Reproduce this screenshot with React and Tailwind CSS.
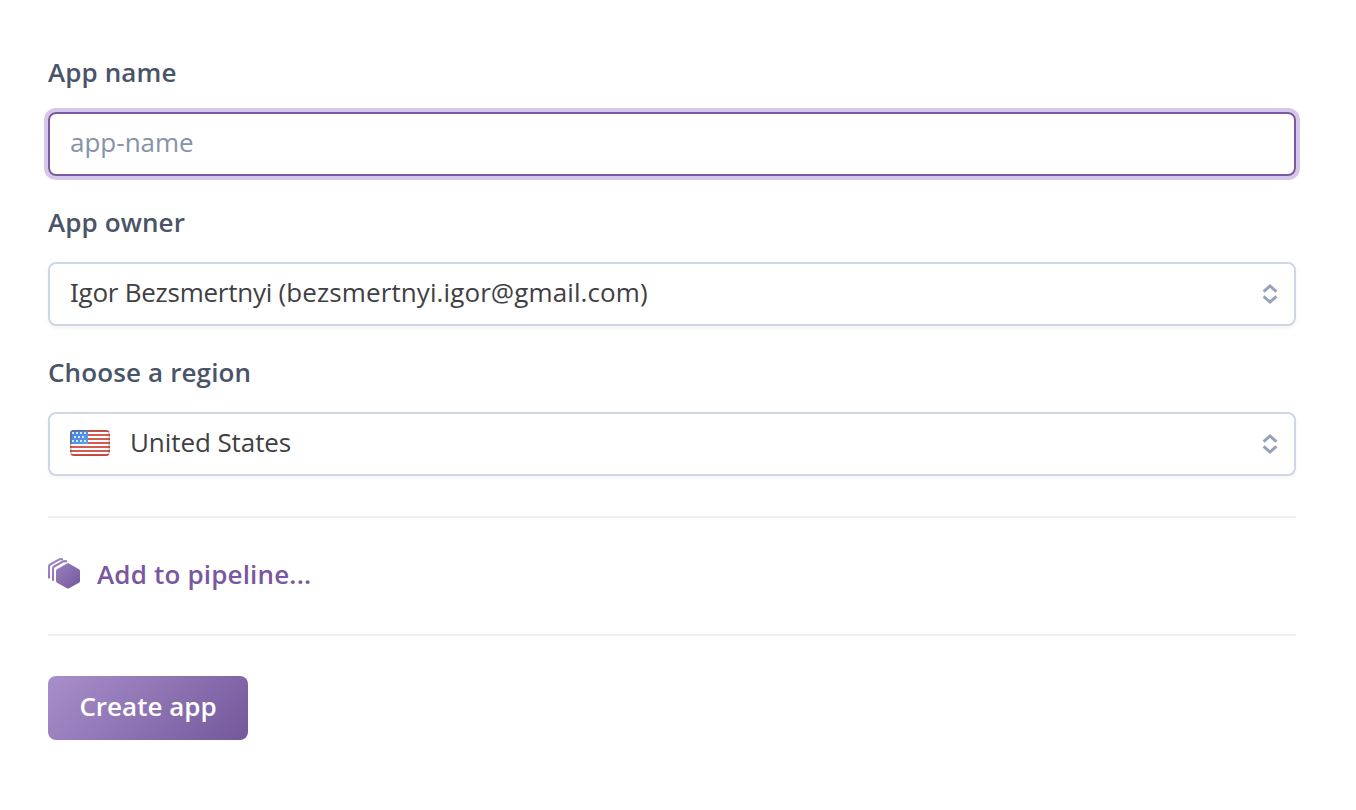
import React from "react";

function Chevrons() {
  return (
    <svg width="16" height="22" viewBox="0 0 16 22" fill="none" stroke="#97a3b9" strokeWidth="3">
      <path d="M1.6 8.7 8 3l6.4 5.7M1.6 13.3 8 19l6.4-5.7" />
    </svg>
  );
}

const stripes = [0, 4, 8, 12, 16, 20, 24];
const stars = [
  [2, 2], [6, 2], [10, 2], [14, 2],
  [4, 6], [8, 6], [12, 6],
  [2, 10], [6, 10], [10, 10], [14, 10],
];

function Flag() {
  return (
    <svg width="40" height="26" viewBox="0 0 40 26" className="mt-0.5 shrink-0">
      <defs>
        <clipPath id="flagClip"><rect width="40" height="26" rx="4" /></clipPath>
        <linearGradient id="canton" x1="0" y1="0" x2="1" y2="1">
          <stop offset="0" stopColor="#3f83d8" />
          <stop offset="1" stopColor="#639fe8" />
        </linearGradient>
      </defs>
      <g clipPath="url(#flagClip)">
        <rect width="40" height="26" fill="#fff" />
        {stripes.map((y) => <rect key={y} y={y} width="40" height="2" fill="#d95a50" />)}
        <rect width="18" height="14" fill="url(#canton)" />
        {stars.map(([x, y]) => <rect key={x + "-" + y} x={x} y={y} width="2" height="2" fill="#d3e5fb" />)}
        <rect x="0.75" y="0.75" width="38.5" height="24.5" rx="3.4" fill="none" stroke="#7c3020" strokeOpacity="0.35" strokeWidth="1.5" />
      </g>
    </svg>
  );
}

function PipelineIcon() {
  return (
    <svg width="32" height="32" viewBox="0 0 32 32" className="shrink-0">
      <defs>
        <linearGradient id="pipe" x1="0" y1="0" x2="32" y2="32" gradientUnits="userSpaceOnUse">
          <stop offset="0" stopColor="#a58cc9" />
          <stop offset="1" stopColor="#73569a" />
        </linearGradient>
      </defs>
      <path d="M21 5.6 31 11.2Q32 11.8 32 13V23Q32 24.2 31 24.8L21 30.2Q20 30.8 19 30.2L9 24.8Q8 24.2 8 23V13Q8 11.8 9 11.2L19 5.6Q20 5 21 5.6Z" fill="url(#pipe)" />
      <path d="M1 20.5V8.6Q1 7.2 2.2 6.5L10.8 1.7Q12.6.7 15 1.4M5 22.8V10.6Q5 9.2 6.2 8.5L14.8 3.7Q16.6 2.7 19 3.4" fill="none" stroke="url(#pipe)" strokeWidth="2.1" />
    </svg>
  );
}

function Label({ children, className }) {
  return <label className={"block h-10 text-[26px] leading-10 font-semibold text-[#4a5468] " + className}>{children}</label>;
}

const field = "flex h-16 items-center rounded-lg border-2 pl-5 text-[26px]";
const select = " mt-5 justify-between border-[#cfd7e6] pr-4 text-[#3f3f44] shadow-[0_2px_4px_#0000000d]";

export default function App() {
  return (
    <main className="h-[810px] bg-white pt-[52px] pr-[60px] pl-12 font-['Open_Sans',sans-serif] whitespace-nowrap">
      <Label className="tracking-[0.1px]">App name</Label>
      <div className={field + " mt-5 border-[#79589f] shadow-[0_0_0_4px_#d5c7e9]"}>
        <input placeholder="app-name" className="w-full bg-transparent pb-1 leading-9 outline-none placeholder:text-[#8593aa]" />
      </div>
      <Label className="mt-[26px] tracking-[0.1px]">App owner</Label>
      <div className={field + select}>
        <span className="pb-1 tracking-[0.1px]">
          <span className="tracking-[-0.25px]"><span className="font-['Noto_Sans',sans-serif]">I</span>gor Bezsmertnyi </span>
          (bezsmertnyi.igor@gmail.com)
        </span>
        <Chevrons />
      </div>
      <Label className="mt-[26px] tracking-[0.13px]">Choose a region</Label>
      <div className={field + select}>
        <div className="flex items-center gap-5 pb-1">
          <Flag />
          <span className="tracking-[-0.08px]">United States</span>
        </div>
        <Chevrons />
      </div>
      <div className="mt-10 flex h-[120px] items-center gap-[17px] border-y-2 border-[#eff0f4] pb-1 text-[26px] font-semibold text-[#79589f]">
        <PipelineIcon />
        <span className="tracking-[0.17px]">Add to pipeline...</span>
      </div>
      <button className="mt-10 flex h-16 w-[200px] items-center justify-center rounded-lg bg-[linear-gradient(135deg,#a88fcb,#73589a)] pb-1 text-[26px] font-semibold text-white">
        Create app
      </button>
    </main>
  );
}
